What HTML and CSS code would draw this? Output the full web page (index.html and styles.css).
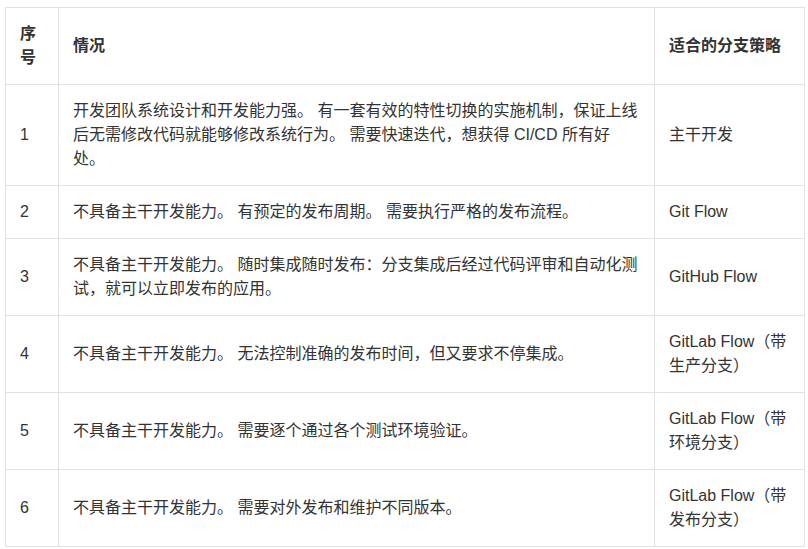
FILE: index.html
```html
<!DOCTYPE html>
<html lang="zh">
<head>
<meta charset="utf-8">
<link rel="stylesheet" href="styles.css">
</head>
<body>
<table class="strategy">
  <colgroup>
    <col class="c-no">
    <col class="c-case">
    <col class="c-strat">
  </colgroup>
  <thead>
    <tr><th>序号</th><th>情况</th><th>适合的分支策略</th></tr>
  </thead>
  <tbody>
    <tr><td>1</td><td>开发团队系统设计和开发能力强。 有一套有效的特性切换的实施机制，保证上线后无需修改代码就能够修改系统行为。 需要快速迭代，想获得 CI/CD 所有好处。</td><td>主干开发</td></tr>
    <tr><td>2</td><td>不具备主干开发能力。 有预定的发布周期。 需要执行严格的发布流程。</td><td>Git Flow</td></tr>
    <tr><td>3</td><td>不具备主干开发能力。 随时集成随时发布：分支集成后经过代码评审和自动化测试，就可以立即发布的应用。</td><td>GitHub Flow</td></tr>
    <tr><td>4</td><td>不具备主干开发能力。 无法控制准确的发布时间，但又要求不停集成。</td><td>GitLab Flow（带生产分支）</td></tr>
    <tr><td>5</td><td>不具备主干开发能力。 需要逐个通过各个测试环境验证。</td><td>GitLab Flow（带环境分支）</td></tr>
    <tr><td>6</td><td>不具备主干开发能力。 需要对外发布和维护不同版本。</td><td>GitLab Flow（带发布分支）</td></tr>
  </tbody>
</table>
</body>
</html>
```
FILE: styles.css
```css
html, body {
  margin: 0;
  background: #ffffff;
}
body {
  padding: 7px 0 0 5px;
  font-family: "Helvetica Neue", "Liberation Sans", "Noto Sans CJK SC", sans-serif;
  font-size: 16px;
  line-height: 24px;
  color: #333333;
}
.strategy {
  width: 799px;
  border-collapse: collapse;
  table-layout: fixed;
}
.c-no { width: 53px; }
.c-case { width: 596px; }
.c-strat { width: 150px; }
.strategy th,
.strategy td {
  border: 1px solid #e2e2e2;
  padding: 14px 13px 14px 14px;
  vertical-align: middle;
  text-align: left;
  word-break: normal;
}
.strategy th {
  font-weight: bold;
}
```
